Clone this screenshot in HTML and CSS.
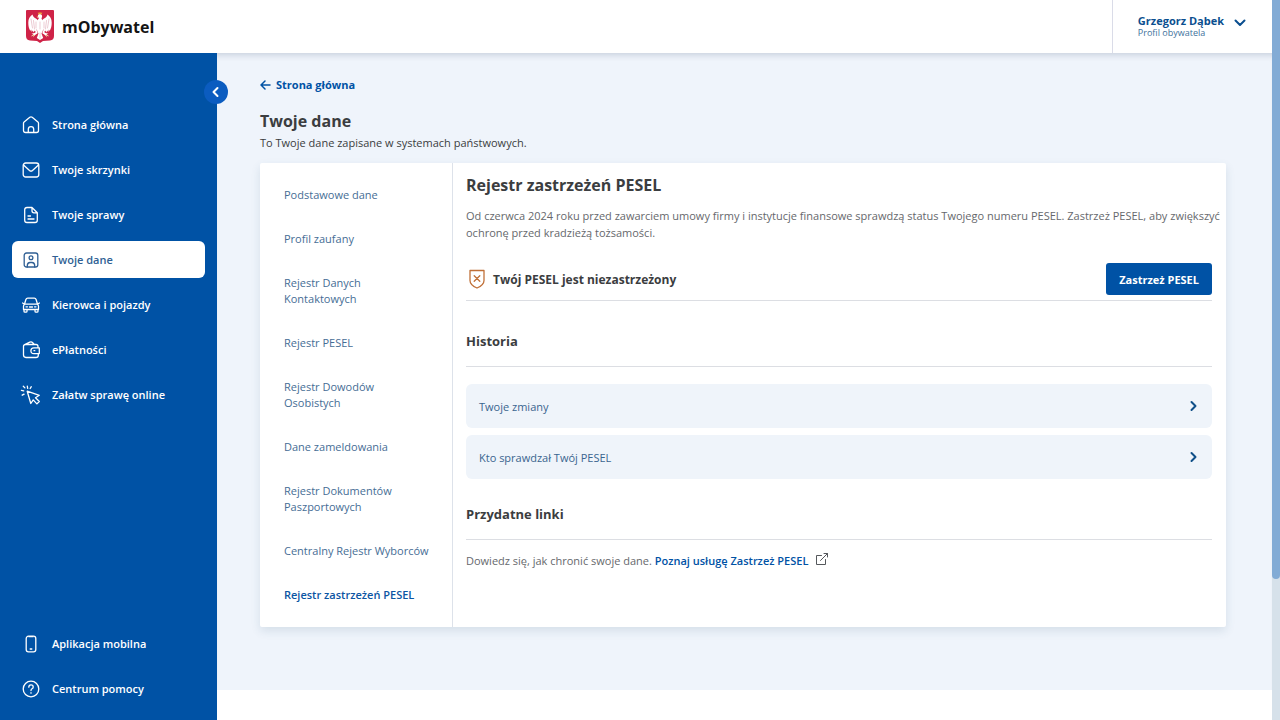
FILE: index.html
```html
<!DOCTYPE html>
<html lang="pl">
<head>
  <meta charset="UTF-8">
  <meta name="viewport" content="width=device-width, initial-scale=1.0">
  <title>mObywatel</title>
  <link rel="stylesheet" href="styles.css">
</head>
<body>
  <div class="app">
    <div class="page">
      <header class="header">
        <a class="brand" href="#">
          <svg class="emblem" viewBox="0 0 28 33">
            <path fill="#cf2347" d="M1 0h26q1 0 1 1v25q0 4-4 4.500l-7 .5-3 2-3-2-7-.5Q0 30 0 26V1q0-1 1-1z"/>
            <g fill="#fff">
              <path d="M12 10.500C10.500 8 7.500 8.500 6.500 4.500 4 6 2.200 9 2.300 12.500c0 3.500.6 6 2 8.500l.8-1.500.7 2.600 1-1.700.8 2 1-1.800.8 1.400L11 19z"/>
              <path d="M16 10.500c1.500-2.500 4.500-2 5.500-6 2.500 1.500 4.300 4.500 4.200 8 0 3.500-.6 6-2 8.500l-.8-1.500-.7 2.600-1-1.700-.8 2-1-1.800-.8 1.400L17 19z"/>
              <path d="M12 6.500c-.3-1.300.5-2.300 1.800-2.400 1.500 0 2.400 1 2.300 2.400l-.6 2.200c1.700 1.800 2.200 4.300 2.200 7.300 0 3-1.200 5.500-2.200 7.500l1.700 4.500L14 30l-3.200-2 1.700-4.500c-1-2-2.200-4.500-2.200-7.500 0-3.300.6-5.700 2.400-7.300l.1-1.200-1.600.2z"/>
              <path d="M10.700 19.500l-1.500 3.300-3.700 1 2 .6-2.700 1.800 2.900-.5-.9 1.700 2.300-2.300 2.600-1.800zM17.300 19.500l1.500 3.300 3.700 1-2 .6 2.700 1.800-2.900-.5.9 1.700-2.300-2.300-2.600-1.800z"/>
            </g>
            <path fill="none" stroke="#d995a5" stroke-width=".5" d="M5 9l1.500 9M7.500 10.500l1 8.500M10 12v6M23 9l-1.500 9M20.500 10.500l-1 8.500M18 12v6M14 12v7M14 23v5"/>
            <path fill="#e9a23b" d="M12.300 4.300l-.5-2 1.200.8L14 2l1 1.100 1.200-.8-.5 2zM12 5.800l-1.600.8 1.800.3zM8 24.700l-2.500 1.500 2.800-.5zM20 24.700l2.500 1.500-2.800-.5z"/>
          </svg>
          <span>mObywatel</span>
        </a>
        <button class="profile" type="button">
          <span class="profile-text">
            <span class="profile-name">Grzegorz Dąbek</span>
            <span class="profile-role">Profil obywatela</span>
          </span>
          <svg class="chevron" viewBox="0 0 12 12"><path d="M1.500 3.500L6 8l4.500-4.500"/></svg>
        </button>
      </header>

      <div class="layout">
        <aside class="sidebar">
          <button class="collapse" type="button" aria-label="Zwiń menu">
            <svg class="chevron" viewBox="0 0 12 12"><path d="M7.500 2L3.500 6l4 4"/></svg>
          </button>
          <nav class="nav">
            <a href="#">
              <svg class="icon" viewBox="0 0 18 18"><path d="M1.500 7.200q0-.8.600-1.300L7.800 1.300q1.200-.9 2.400 0l5.700 4.600q.6.500.6 1.300v7.300q0 2-2 2h-11q-2 0-2-2zM6.300 16.500v-3.200a2.700 2.700 0 0 1 5.400 0v3.200"/></svg>
              Strona główna
            </a>
            <a href="#">
              <svg class="icon" viewBox="0 0 18 18"><rect x="1.200" y="2" width="15.600" height="14" rx="2.500"/><path d="M1.800 4.300l5.700 5.200q1.500 1.300 3 0l5.700-5.200"/></svg>
              Twoje skrzynki
            </a>
            <a href="#">
              <svg class="icon" viewBox="0 0 18 18"><path d="M10 1.500H5q-2.300 0-2.300 2.300v10.400q0 2.300 2.300 2.300h8q2.300 0 2.300-2.300V6.800zM10 1.500v3.300q0 2 2 2h3.300M6 10h2.500M6 13h6"/></svg>
              Twoje sprawy
            </a>
            <a class="active" href="#">
              <svg class="icon" viewBox="0 0 18 18"><rect x="2.200" y="2" width="13.600" height="14" rx="2.300"/><circle cx="9" cy="6.700" r="1.900"/><path d="M5.300 16v-1.300q0-3.200 2.700-3.200h2q2.700 0 2.700 3.200V16"/></svg>
              Twoje dane
            </a>
            <a href="#">
              <svg class="icon" viewBox="0 0 18 18"><path d="M2.500 8.200l1.300-4.400q.5-1.600 2-1.600h6.400q1.500 0 2 1.600l1.300 4.400M.6 7l2 1.200h12.800l2-1.200M2.500 8.200q-1 .8-1 2v3.300h15v-3.300q0-1.200-1-2M2 13.500v1.700q0 1 1 1h1q1 0 1-1v-1.700M13 13.500v1.700q0 1 1 1h1q1 0 1-1v-1.700M4 10.800h1.500M12.500 10.800H14M7.500 11h3"/></svg>
              Kierowca i pojazdy
            </a>
            <a href="#">
              <svg class="icon" viewBox="0 0 18 18"><path d="M16 6.800V5.500q0-2-2-2H3.500q-2 0-2 1.700v8.900q0 2.400 2.400 2.400H14q2.300 0 2.300-2.300v-1.600M2.200 3.900L7.800 1.200q1.700-.7 2.900.5l1.600 1.800M17.300 6.800h-5.500q-2.900 0-2.900 2.900t2.900 2.900h5.500zM12 9.700h.8"/></svg>
              ePłatności
            </a>
            <a href="#">
              <svg class="icon" viewBox="0 0 18 18"><path d="M5.200 5.200l3.600 12.300 2.400-3.600 3.700 4 2.400-2.400-3.800-3.800 3.800-2.400zM5.300.2l.4 2.200M9.300.7L8.200 2.500M-.6 4.300l2.300.5M.2 9.200l1.900-1M1.300.3l1.600 1.600"/></svg>
              Załatw sprawę online
            </a>
          </nav>
          <nav class="nav">
            <a href="#">
              <svg class="icon" viewBox="0 0 18 18"><rect x="4.200" y="1.200" width="9.600" height="15.600" rx="2.300"/><path d="M7 1.700h4M8.200 14h1.600"/></svg>
              Aplikacja mobilna
            </a>
            <a href="#">
              <svg class="icon" viewBox="0 0 18 18"><circle cx="9" cy="9" r="7.800"/><path d="M6.800 7.200q0-2.300 2.200-2.300t2.200 2q0 1.200-1.200 1.900-1 .6-1 1.700M9 12.700v.5"/></svg>
              Centrum pomocy
            </a>
          </nav>
        </aside>

        <div class="content">
          <main class="main">
            <a class="back" href="#">
              <svg class="arrow" viewBox="0 0 12 12"><path d="M10 6H1M5 2L1 6l4 4"/></svg>
              Strona główna
            </a>
            <h1>Twoje dane</h1>
            <p class="lead">To Twoje dane zapisane w systemach państwowych.</p>

            <div class="card">
              <nav class="registers">
                <a href="#">Podstawowe dane</a>
                <a href="#">Profil zaufany</a>
                <a href="#">Rejestr Danych<br>Kontaktowych</a>
                <a href="#">Rejestr PESEL</a>
                <a href="#">Rejestr Dowodów<br>Osobistych</a>
                <a href="#">Dane zameldowania</a>
                <a href="#">Rejestr Dokumentów<br>Paszportowych</a>
                <a href="#">Centralny Rejestr Wyborców</a>
                <a class="current" href="#">Rejestr zastrzeżeń PESEL</a>
              </nav>

              <section class="details">
                <h2>Rejestr zastrzeżeń PESEL</h2>
                <p class="description">Od czerwca 2024 roku przed zawarciem umowy firmy i instytucje finansowe sprawdzą status Twojego numeru PESEL. Zastrzeż PESEL, aby zwiększyć ochronę przed kradzieżą tożsamości.</p>

                <div class="status">
                  <svg class="shield" viewBox="0 0 16 20"><path d="M1 1.500h14v10q0 4.500-7 7.500-7-3-7-7.500zM5.200 6.700l5.600 5.600M10.800 6.700l-5.600 5.600"/></svg>
                  <strong>Twój PESEL jest niezastrzeżony</strong>
                  <button class="primary" type="button">Zastrzeż PESEL</button>
                </div>

                <h3>Historia</h3>
                <div class="links">
                  <a href="#">Twoje zmiany
                    <svg class="chevron" viewBox="0 0 12 12"><path d="M4.500 2l4 4-4 4"/></svg>
                  </a>
                  <a href="#">Kto sprawdzał Twój PESEL
                    <svg class="chevron" viewBox="0 0 12 12"><path d="M4.500 2l4 4-4 4"/></svg>
                  </a>
                </div>

                <h3>Przydatne linki</h3>
                <p class="more">Dowiedz się, jak chronić swoje dane. <a href="#">Poznaj usługę Zastrzeż PESEL<svg class="external" viewBox="0 0 12 12"><path d="M5.500 2.500h-5v9h9v-5M4.500 7.500l7-7M8 .5h3.500V4"/></svg></a></p>
              </section>
            </div>
          </main>
          <footer class="footer"></footer>
        </div>
      </div>
    </div>
    <div class="scrollbar"><div class="thumb"></div></div>
  </div>
</body>
</html>
```

FILE: styles.css
```css
* {
  box-sizing: border-box;
}

body {
  margin: 0;
  font-family: "Open Sans", "Noto Sans", sans-serif;
  font-size: 11px;
  color: #3b3d40;
  background: #fff;
}

h1, h2, h3, p {
  margin: 0;
}

a {
  color: #0052a5;
  text-decoration: none;
}

button {
  font-family: inherit;
  border: none;
  cursor: pointer;
}

svg {
  flex: none;
  fill: none;
  stroke: currentColor;
  stroke-linecap: round;
  stroke-linejoin: round;
}

.app {
  display: flex;
  min-height: 100vh;
}

.page {
  flex: 1;
  display: flex;
  flex-direction: column;
}

/* header */
.header {
  display: flex;
  justify-content: space-between;
  height: 53px;
  background: #fff;
}

.brand {
  display: flex;
  align-items: center;
  gap: 8px;
  padding-left: 26px;
  font-size: 16px;
  font-weight: bold;
  color: #141414;
}

.emblem {
  width: 28px;
  height: 33px;
  stroke: none;
}

.profile {
  display: flex;
  align-items: center;
  gap: 10px;
  padding: 0 26px 8px 25px;
  border-left: 1px solid #dadce8;
  background: #fff;
  color: #0b4f8f;
  text-align: left;
}

.profile-text {
  display: flex;
  flex-direction: column;
  padding-top: 8px;
}

.profile-name {
  font-size: 11px;
  line-height: 13px;
  font-weight: bold;
}

.profile-role {
  font-size: 9px;
  line-height: 12px;
  color: #41729c;
}

.chevron {
  width: 12px;
  height: 12px;
  stroke-width: 2;
}

/* sidebar */
.layout {
  flex: 1;
  display: flex;
}

.sidebar {
  position: relative;
  display: flex;
  flex-direction: column;
  justify-content: space-between;
  width: 217px;
  padding: 53px 12px 13px;
  background: #0052a5;
}

.collapse {
  position: absolute;
  top: 27px;
  right: -11px;
  display: flex;
  align-items: center;
  justify-content: center;
  width: 24px;
  height: 24px;
  padding: 0;
  border-radius: 50%;
  background: #0b5cc0;
  color: #fff;
}

.nav {
  display: flex;
  flex-direction: column;
  gap: 8px;
}

.nav a {
  display: flex;
  align-items: center;
  gap: 12px;
  height: 37px;
  padding: 0 10px;
  border-radius: 6px;
  font-weight: 600;
  color: #fff;
}

.nav .active {
  background: #fff;
  color: #2f5f94;
}

.icon {
  width: 18px;
  height: 18px;
  stroke-width: 1.3;
  overflow: visible;
}

/* main content */
.content {
  flex: 1;
  display: flex;
  flex-direction: column;
}

.main {
  flex: 1;
  padding: 24px 46px 24px 43px;
  background: #eff4fb;
  box-shadow: inset 0 7px 6px -5px rgba(40, 60, 100, 0.2);
}

.footer {
  height: 30px;
}

.back {
  display: inline-flex;
  align-items: center;
  gap: 4px;
  line-height: 16px;
  font-weight: bold;
}

.arrow {
  width: 12px;
  height: 12px;
  stroke-width: 1.5;
}

h1 {
  margin-top: 17px;
  font-size: 16px;
  line-height: 20px;
}

.lead {
  margin-top: 4px;
  line-height: 16px;
}

.card {
  display: flex;
  margin-top: 12px;
  border-radius: 2px;
  background: #fff;
  box-shadow: 0 4px 10px rgba(60, 100, 130, 0.14);
}

.registers {
  display: flex;
  flex-direction: column;
  gap: 28px;
  width: 193px;
  padding: 24px 0 24px 24px;
  border-right: 1px solid #dde2ea;
  line-height: 16px;
}

.registers a {
  color: #466d95;
}

.registers .current {
  font-weight: 600;
  color: #0b55a3;
}

.details {
  flex: 1;
  padding: 12px 14px 12px 13px;
}

h2 {
  font-size: 16px;
  line-height: 20px;
}

.description {
  margin: 12px -14px 0 0;
  line-height: 17px;
  color: #66686c;
}

.status {
  display: flex;
  align-items: center;
  gap: 8px;
  margin-top: 22px;
  padding: 0 0 5px 3px;
  border-bottom: 1px solid #dcdee3;
  font-size: 12px;
}

.shield {
  width: 16px;
  height: 20px;
  stroke-width: 1.3;
  color: #c07038;
}

.primary {
  height: 32px;
  margin-left: auto;
  padding: 0 13px;
  border-radius: 3px;
  background: #0052a5;
  color: #fff;
  font-size: 11px;
  font-weight: bold;
}

h3 {
  margin-top: 30px;
  padding-bottom: 15px;
  border-bottom: 1px solid #dcdee3;
  font-size: 13px;
  line-height: 20px;
}

.links {
  display: flex;
  flex-direction: column;
  gap: 7px;
  margin: 17px 0 25px;
}

.links + h3 {
  margin-top: 0;
}

.links a {
  display: flex;
  align-items: center;
  justify-content: space-between;
  height: 44px;
  padding: 0 13px;
  border-radius: 6px;
  background: #eff4fa;
  color: #3a658f;
}

.links .chevron {
  color: #0f4f88;
}

.more {
  margin-top: 12px;
  line-height: 18px;
  color: #66686c;
}

.more a {
  font-weight: 600;
}

.external {
  width: 12px;
  height: 12px;
  margin-left: 8px;
  color: #55585c;
}

/* scrollbar */
.scrollbar {
  width: 8px;
  background: #d6e1ea;
}

.thumb {
  height: 579px;
  border-radius: 0 0 4px 4px;
  background: #82abd5;
}
```
